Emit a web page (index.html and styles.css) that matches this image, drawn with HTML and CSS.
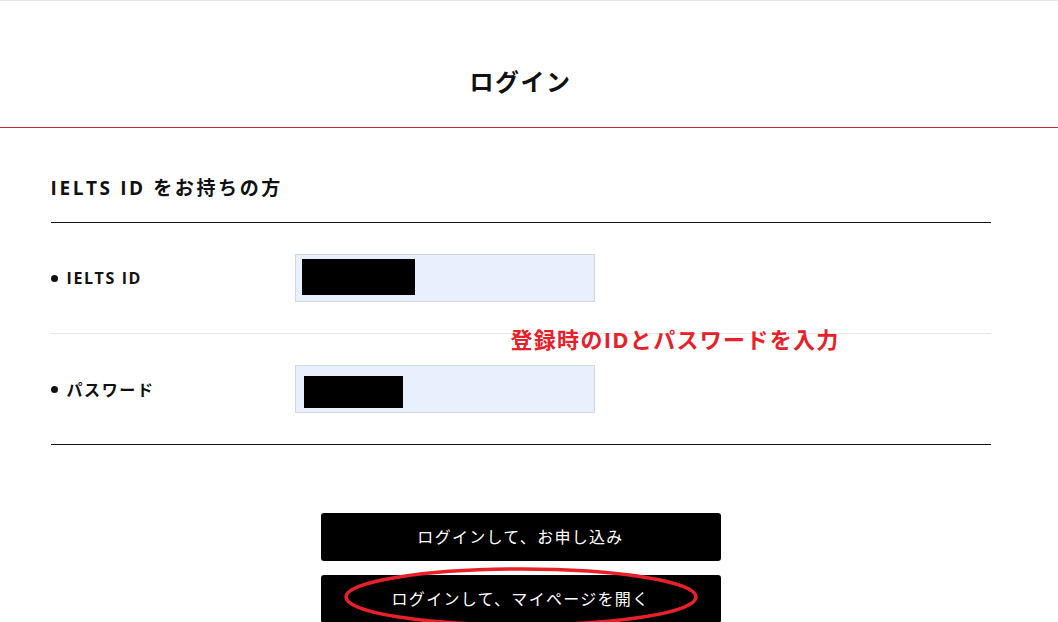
FILE: index.html
```html
<!DOCTYPE html>
<html lang="ja">
<head>
  <meta charset="UTF-8">
  <meta name="viewport" content="width=device-width, initial-scale=1.0">
  <title>ログイン</title>
  <link rel="stylesheet" href="styles.css">
</head>
<body>
  <!-- Header -->
  <div class="header">
    <h1>ログイン</h1>
  </div>

  <!-- Main -->
  <div class="page">
    <div class="container">
      <h2 class="section-title">IELTS ID をお持ちの方</h2>

      <div class="form">
        <div class="form-row">
          <label class="label">IELTS ID</label>
          <div class="field"><span class="redact redact-id"></span></div>
        </div>
        <div class="form-row">
          <label class="label">パスワード</label>
          <div class="field"><span class="redact redact-pw"></span></div>
        </div>
        <div class="note">登録時のIDとパスワードを入力</div>
      </div>

      <div class="actions">
        <button class="btn">ログインして、お申し込み</button>
        <button class="btn btn-mypage">ログインして、マイページを開く
          <svg class="circle" width="358" height="62" viewBox="0 0 358 62">
            <ellipse cx="179" cy="31" rx="175" ry="28" fill="none" stroke="#e8202a" stroke-width="3.5"/>
          </svg>
        </button>
      </div>
    </div>
  </div>
</body>
</html>
```

FILE: styles.css
```css
body {
  margin: 0;
  padding: 0;
  background: #fff;
  color: #111;
  font-family: "Open Sans", "Noto Sans CJK JP", sans-serif;
  border-top: 1px solid #e6e6e6;
}

.header {
  height: 126px;
  border-bottom: 1px solid #c9283a;
  display: flex;
  align-items: center;
  justify-content: center;
  padding-right: 17px;
}

.header h1 {
  margin: 0;
  font-size: 24px;
  font-weight: bold;
  letter-spacing: 1.5px;
  color: #111;
  padding-top: 33px;
}

.page {
  width: 1041px;
}

.container {
  width: 940px;
  margin: 0 auto;
}

.section-title {
  margin: 0;
  padding: 48px 0 22px;
  font-size: 19px;
  font-weight: bold;
  letter-spacing: 2.6px;
  border-bottom: 1px solid #111;
  line-height: 24px;
}

.form {
  position: relative;
  border-bottom: 1px solid #111;
}

.form-row {
  display: flex;
  align-items: center;
  padding: 31px 0;
}

.form-row + .form-row {
  border-top: 1px solid #e8e8e8;
}

.label {
  width: 244px;
  font-size: 16px;
  font-weight: bold;
  letter-spacing: 1.6px;
  display: flex;
  align-items: center;
}

.label::before {
  content: "";
  width: 7px;
  height: 7px;
  border-radius: 50%;
  background: #111;
  margin-right: 9px;
}

.field {
  width: 298px;
  height: 46px;
  background: #e8f0fe;
  border: 1px solid #d3d6dc;
  position: relative;
}

.redact {
  position: absolute;
  background: #000;
}

.redact-id {
  left: 6px;
  top: 4px;
  width: 113px;
  height: 36px;
}

.redact-pw {
  left: 8px;
  top: 10px;
  width: 99px;
  height: 32px;
}

.note {
  position: absolute;
  left: 460px;
  top: 99px;
  color: #e8202a;
  font-size: 22px;
  font-weight: bold;
  letter-spacing: 1.3px;
  white-space: nowrap;
}

.actions {
  display: flex;
  flex-direction: column;
  align-items: center;
  gap: 14px;
  padding-top: 68px;
}

.btn {
  width: 400px;
  height: 48px;
  background: #000;
  color: #fff;
  border: none;
  border-radius: 3px;
  font-family: "Noto Sans CJK JP", sans-serif;
  font-size: 16px;
  letter-spacing: 1.3px;
  padding-bottom: 3px;
  cursor: pointer;
}

.btn-mypage {
  position: relative;
}

.circle {
  position: absolute;
  left: 21px;
  top: -9px;
}
```
